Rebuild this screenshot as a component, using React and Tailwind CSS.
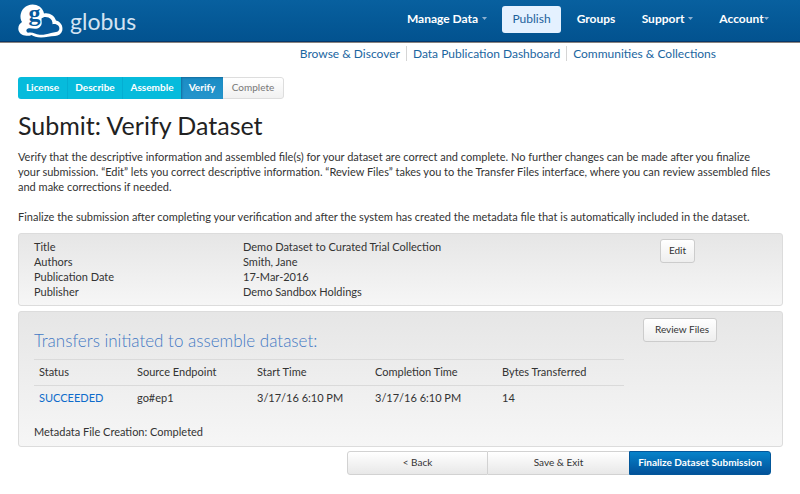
const navItems = [
  { label: "Manage Data", caret: true, width: "w-[110px]" },
  { label: "Publish", active: true, width: "w-[59px]" },
  { label: "Groups", width: "w-[70px]" },
  { label: "Support", caret: true, width: "w-[73px]" },
  { label: "Account", caret: true, tight: true, width: "w-[80px]" },
];

const metadata = [
  ["Title", "Demo Dataset to Curated Trial Collection"],
  ["Authors", "Smith, Jane"],
  ["Publication Date", "17-Mar-2016"],
  ["Publisher", "Demo Sandbox Holdings"],
];

function Logo() {
  return (
    <a href="#" className="flex items-center gap-1.5 text-[#d3e3f2]">
      <svg viewBox="0 0 46 34" className="h-[34px] w-[46px] overflow-visible" aria-hidden="true">
        <path
          fill="#fff"
          d="M7 31.500C3 31 .2 28 .3 24.500C.4 21 2 19.500 4 18C1.500 14 2 8 6 4C10-.3 17-.6 21.500 2.500C24 4.200 25.500 7 26 9.500C31.500 8.500 36.500 11.500 38 16.500C42.500 17.500 45.300 22 44.300 26.500C43.400 30 40.500 31.700 37 32C32 32.300 28 33.500 23 33.500C18.500 33.300 16 32.600 13.500 31C11.500 32 9 32 7 31.500Z"
        />
        <path
          fill="#06599b"
          d="M10 28.800C7.500 27.500 8 24.800 11 24.300C13 24 15 24.800 17 24.800C20.500 24.800 23.500 22.500 23.700 19L23.500 14.500C25 12.800 28 12.500 30.500 13.500C33.500 14.800 34.800 17.500 34.500 20.300C38.500 19.300 42 22 41.300 25.300C40.500 28.700 36 28.300 33 29C29 30 26 31 21.500 30.800C17 30.500 15 27.600 10 28.800Z"
        />
        <text x="10.500" y="17" fontSize="24" fontWeight="700" fill="#06599b" className="font-['Liberation_Serif',serif]">
          g
        </text>
      </svg>
      <span className="text-[23px] leading-7">globus</span>
    </a>
  );
}

function Caret() {
  return (
    <svg viewBox="0 0 5 3" className="h-[3px] w-[5px] fill-[#8fb0d0]" aria-hidden="true">
      <path d="M0 0h5L2.500 3z" />
    </svg>
  );
}

export default function App() {
  return (
    <div className="bg-white font-['Lato',sans-serif] text-[11px] leading-[15px] text-[#333]">
      <header className="flex h-[43px] items-start justify-between border-b border-[#8b8580] bg-linear-to-b from-[#08609f] to-[#02528f] pr-[16px] pl-[18px] shadow-[inset_0_-1px_0_#06386b]">
        <div className="pt-[4px]">
          <Logo />
        </div>
        <nav className="flex pt-[6px] text-[12px] font-bold text-white">
          {navItems.map((item) => (
            <a
              key={item.label}
              href="#"
              className={`flex h-[27px] items-center justify-center pb-[2px] ${item.width} ${item.tight ? "gap-0" : "gap-1"} ${
                item.active ? "rounded-[3px] bg-[#e4f1ff] font-normal text-[#1c619c]" : ""
              }`}
            >
              {item.label}
              {item.caret && <Caret />}
            </a>
          ))}
        </nav>
      </header>

      <nav className="flex justify-end pt-[3px] pr-[78px] text-[12px] text-[#1b669f]">
        <a href="#" className="border-r border-[#d5d5d5] px-[6px]">Browse &amp; Discover</a>
        <a href="#" className="border-r border-[#d5d5d5] px-[6px]">Data Publication Dashboard</a>
        <a href="#" className="px-[6px]">Communities &amp; Collections</a>
      </nav>

      <main className="pr-[17px] pl-[18px]">
        <ol className="mt-[16px] flex h-[22px] w-[266px] overflow-hidden rounded-[3px] text-[10px] font-bold text-white">
          <li className="flex w-[50px] items-center justify-center border-r border-[#04aed2] bg-[#06bbdc] pb-px">License</li>
          <li className="flex w-[55px] items-center justify-center border-r border-[#04aed2] bg-[#06bbdc] pb-px">Describe</li>
          <li className="flex w-[58px] items-center justify-center bg-[#06bbdc] pb-px">Assemble</li>
          <li className="flex w-[42px] items-center justify-center bg-linear-to-b from-[#1a8cc4] to-[#2595cc] pb-px shadow-[inset_1px_1px_2px_#146d9f]" aria-current="step">
            Verify
          </li>
          <li className="flex flex-1 items-center justify-center rounded-r-[3px] border border-l-0 border-[#ddd] bg-linear-to-b from-white to-[#f1f1f1] pb-px font-normal text-[#777]">
            Complete
          </li>
        </ol>

        <h1 className="mt-[10px] text-[25px] leading-[32px] text-[#222]">Submit: Verify Dataset</h1>

        <p className="mt-[8px]">
          Verify that the descriptive information and assembled file(s) for your dataset are correct and complete. No further changes can be made after you finalize
          <br />
          your submission. “Edit” lets you correct descriptive information. “Review Files” takes you to the Transfer Files interface, where you can review assembled files
          <br />
          and make corrections if needed.
        </p>
        <p className="mt-[15px]">
          Finalize the submission after completing your verification and after the system has created the metadata file that is automatically included in the dataset.
        </p>

        <section className="mt-[9px] flex items-start rounded-[3px] border border-[#dcdcdc] bg-linear-to-b from-[#e6e6e6] to-[#f6f6f6] px-[15px] py-[5px]">
          <dl className="grid grow grid-cols-[209px_1fr] pb-px">
            {metadata.map(([term, value]) => (
              <div key={term} className="contents">
                <dt>{term}</dt>
                <dd>{value}</dd>
              </div>
            ))}
          </dl>
          <button className="mr-[72px] h-[24px] w-[35px] rounded-[3px] border border-[#ccc] bg-linear-to-b from-white to-[#eee] pb-px text-[10px]">
            Edit
          </button>
        </section>

        <section className="mt-[5px] flex items-start justify-between rounded-[3px] border border-[#dcdcdc] bg-linear-to-b from-[#e6e6e6] to-[#f6f6f6] px-[15px] pt-[6px] pb-[7px]">
          <div className="w-[590px]">
            <h2 className="mt-[12px] text-[17px] leading-[22px] font-light text-[#4479c4]">Transfers initiated to assemble dataset:</h2>
            <table className="mt-[7px] w-full table-fixed text-left">
              <colgroup>
                <col className="w-[98px]" />
                <col className="w-[120px]" />
                <col className="w-[118px]" />
                <col className="w-[127px]" />
                <col />
              </colgroup>
              <thead>
                <tr className="h-[26px] border-t border-[#dadada]">
                  {["Status", "Source Endpoint", "Start Time", "Completion Time", "Bytes Transferred"].map((h) => (
                    <th key={h} className="pb-[2px] pl-[5px] font-normal">{h}</th>
                  ))}
                </tr>
              </thead>
              <tbody>
                <tr className="h-[26px] border-t border-[#dadada]">
                  <td className="pb-[2px] pl-[5px]"><a href="#" className="text-[#0d6bcb]">SUCCEEDED</a></td>
                  <td className="pb-[2px] pl-[5px]">go#ep1</td>
                  <td className="pb-[2px] pl-[5px]">3/17/16 6:10 PM</td>
                  <td className="pb-[2px] pl-[5px]">3/17/16 6:10 PM</td>
                  <td className="pb-[2px] pl-[5px]">14</td>
                </tr>
              </tbody>
            </table>
            <p className="mt-[12px]">Metadata File Creation: Completed</p>
          </div>
          <button className="mr-[50px] h-[24px] w-[74px] rounded-[3px] border border-[#ccc] bg-linear-to-b from-white to-[#eee] pb-[2px] pl-[4px] text-[10px]">
            Review Files
          </button>
        </section>

        <div className="mt-[4px] mr-[12px] flex h-[24px] justify-end text-[10px]">
          <button className="w-[141px] rounded-l-[3px] border border-[#d2d2d2] bg-linear-to-b from-white to-[#e8e8e8] pb-px">&lt; Back</button>
          <button className="w-[141px] border-y border-[#d2d2d2] bg-linear-to-b from-white to-[#e8e8e8] pb-px">Save &amp; Exit</button>
          <button className="w-[142px] rounded-r-[3px] border border-[#03579a] bg-linear-to-b from-[#0783ca] to-[#03529a] pb-px font-bold text-white">
            Finalize Dataset Submission
          </button>
        </div>
      </main>
    </div>
  );
}
